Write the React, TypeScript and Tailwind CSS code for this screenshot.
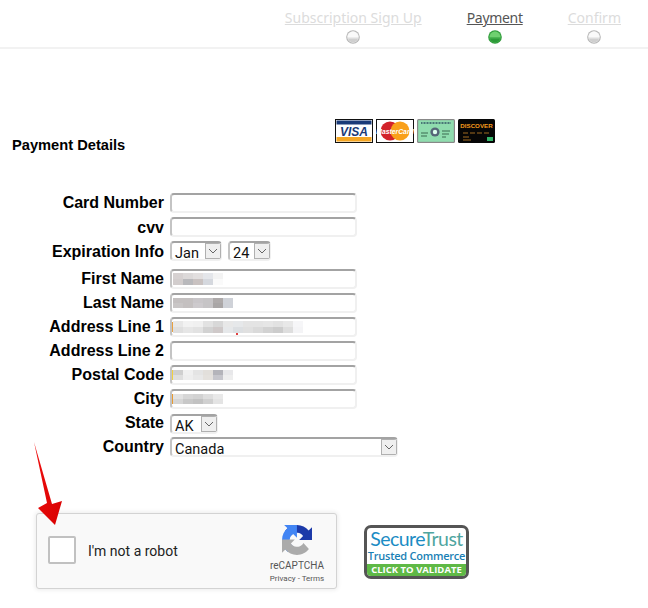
const steps = [
  { name: "Subscription Sign Up", active: false },
  { name: "Payment", active: true },
  { name: "Confirm", active: false },
];

type Cell = string;

const firstName: Cell[][] = [
  ["bg-[#d6d1d1]", "bg-[#dcd9d9]", "bg-[#e2dfdf]", "bg-[#e4e6ea]", "bg-[#f3f3f3]"],
  ["bg-[#d2cdcd]", "bg-[#b9b9bc]", "bg-[#c9c2c1]", "bg-[#d5d8de]", "bg-[#fafafa]"],
];
const lastName: Cell[][] = [
  ["bg-[#c4c0c0]", "bg-[#c4c0c0]", "bg-[#c9c6c9]", "bg-[#c6c4c6]", "bg-[#aeaaaa]", "bg-[#cfd2d8]"],
  ["bg-[#c9c6c6]", "bg-[#c4c0c0]", "bg-[#cdcacd]", "bg-[#c6c4c6]", "bg-[#a9a6a6]", "bg-[#cfd2d8]"],
];
const address: Cell[][] = [
  ["bg-[#e8e8e8]", "bg-[#f2f2f2]", "bg-[#f0f0f0]", "bg-[#e2e2e2]", "bg-[#d8d8d8]", "bg-[#e8e8e8]", "bg-[#e6e8ea]", "bg-[#e4e4e4]", "bg-[#e4e4e4]", "bg-[#e6e6e6]", "bg-[#e2e2e2]", "bg-[#e8e8e8]", "bg-[#f6f6f8]"],
  ["bg-[#dfdfdf]", "bg-[#e6e6e6]", "bg-[#e2e2e2]", "bg-[#d2d2d2]", "bg-[#cfc9c9]", "bg-[#e6e8ea]", "bg-[#dcdfe2]", "bg-[#e0e0e0]", "bg-[#dadada]", "bg-[#d2d2d2]", "bg-[#cccccc]", "bg-[#dedede]", "bg-[#f4f4f6]"],
];
const postal: Cell[][] = [
  ["bg-[#cfcfcf]", "bg-[#f0f0f0]", "bg-[#e4e4e4]", "bg-[#e2dfdb]", "bg-[#b4b4ba]", "bg-[#e8e8ea]"],
  ["bg-[#dedede]", "bg-[#eeeeee]", "bg-[#e8e8e8]", "bg-[#e4e1dd]", "bg-[#c6c6cc]", "bg-[#eeeeee]"],
];
const city: Cell[][] = [
  ["bg-[#e2e2e2]", "bg-[#d6d6d6]", "bg-[#d2d2d2]", "bg-[#dedede]", "bg-[#e9e9e9]"],
  ["bg-[#d6d6d6]", "bg-[#c8c8c8]", "bg-[#c2c2c2]", "bg-[#d0d0d0]", "bg-[#e4e4e4]"],
];

function Dot({ active }: { active: boolean }) {
  return (
    <svg width="14" height="14" viewBox="0 0 14 14">
      <circle cx="7" cy="7" r="6.8" fill={active ? "#2f9a3a" : "#b4b4b4"} />
      <circle cx="7" cy="7" r="5.8" fill={active ? "#4cb653" : "#ececec"} />
      <path d="M1.6 7a5.4 5.4 0 0 1 10.8 0z" fill={active ? "#6fd070" : "#fafafa"} />
      <path d="M2 8.4h10a5.2 5.2 0 0 1-10 0z" fill={active ? "#2c9a38" : "#cfcfcf"} />
    </svg>
  );
}

function Pixels({ rows, edge, rowH = "h-[5px]" }: { rows: Cell[][]; edge?: string; rowH?: string }) {
  return (
    <div className="flex items-center">
      <div className={`h-[10px] w-[1px] ${edge ?? "bg-transparent"}`} />
      <div className="flex flex-col">
        {rows.map((row, i) => (
          <div key={i} className={`flex ${rowH}`}>
            {row.map((c, j) => (
              <div key={j} className={`w-[10px] ${c}`} />
            ))}
          </div>
        ))}
      </div>
    </div>
  );
}

function TextBox({ children }: { children?: React.ReactNode }) {
  return (
    <div className="relative flex h-[20px] w-[187px] items-center overflow-hidden rounded-[4px] border-2 border-t-[#a3a3a3] border-r-[#f0f0f0] border-b-[#f0f0f0] border-l-[#c4c4c4] bg-white">
      {children}
    </div>
  );
}

function SelectBox({ value, width }: { value: string; width: string }) {
  return (
    <div
      className={`flex h-[20px] ${width} overflow-hidden rounded-[4px] border-2 border-r border-t-[#a3a3a3] border-r-[#f0f0f0] border-b-[#f0f0f0] border-l-[#c4c4c4] bg-white`}
    >
      <span className="flex-1 pl-[3px] font-['Roboto',sans-serif] text-[14.5px] leading-[22px] text-[#111]">
        {value}
      </span>
      <span className="flex h-[16px] w-[16px] items-center justify-center border border-[#b0b0b0] bg-[#efefef]">
        <svg width="10" height="6" viewBox="0 0 10 6">
          <path d="M1 1l4 4 4-4" fill="none" stroke="#666" strokeWidth="1" />
        </svg>
      </span>
    </div>
  );
}

function Row({
  label,
  h,
  pt = "pt-[1px]",
  children,
}: {
  label: string;
  h: string;
  pt?: string;
  children: React.ReactNode;
}) {
  return (
    <div className={`flex ${h} items-start gap-[6px]`}>
      <div className={`w-[164px] ${pt} text-right text-[16px] font-bold leading-[18px] text-black`}>{label}</div>
      {children}
    </div>
  );
}

function CardLogos() {
  return (
    <div className="flex gap-[3px]">
      <svg width="38" height="24" viewBox="0 0 38 24">
        <rect width="38" height="24" fill="#111" />
        <rect x="1" y="1" width="36" height="22" fill="#fff" />
        <rect x="1.5" y="1.5" width="35" height="4" fill="#1a3a78" />
        <rect x="1.5" y="18" width="35" height="4.5" fill="#f5a623" />
        <text x="19" y="16.5" textAnchor="middle" fontFamily="Liberation Sans" fontWeight="700" fontStyle="italic" fontSize="12" fill="#1a3a78">
          VISA
        </text>
      </svg>
      <svg width="38" height="24" viewBox="0 0 38 24">
        <rect width="38" height="24" fill="#111" />
        <rect x="1" y="1" width="36" height="22" fill="#fff" />
        <circle cx="14" cy="12" r="9.5" fill="#d2222a" />
        <circle cx="24" cy="12" r="9.5" fill="#f9a01b" />
        <text x="19" y="14.5" textAnchor="middle" fontFamily="Liberation Sans" fontWeight="700" fontStyle="italic" fontSize="6.8" fill="#fff">
          MasterCard
        </text>
      </svg>
      <svg width="38" height="24" viewBox="0 0 38 24">
        <rect width="38" height="24" rx="1.5" fill="#888" />
        <rect x="1.2" y="1.2" width="35.6" height="21.6" fill="#8fdcae" />
        <path d="M4 4h30" stroke="#356" strokeWidth="1.4" strokeDasharray="1 0.5" />
        <circle cx="18" cy="13" r="4.6" fill="#567" />
        <circle cx="18" cy="13" r="2.2" fill="#dfe" />
        <path d="M4 14h7M4 17h6M25 12h8M25 15h7M25 18h4" stroke="#3b6a50" strokeWidth="1" />
      </svg>
      <svg width="37" height="24" viewBox="0 0 37 24">
        <rect width="37" height="24" rx="1.5" fill="#060606" />
        <text x="18.5" y="8.5" textAnchor="middle" fontFamily="Liberation Sans" fontWeight="700" fontSize="6.2" fill="#f59a1d">
          DISCOVER
        </text>
        <path d="M5 14h5M12 14h5M19 14h5M26 14h5M5 18h6M5 21h8" stroke="#a06a20" strokeWidth="1" />
        <rect x="29" y="18" width="6" height="4" fill="#35b56a" />
      </svg>
    </div>
  );
}

function RecaptchaLogo() {
  return (
    <svg width="30" height="30" viewBox="0 0 64 64">
      <path
        d="M64 31.955l-.033-1.37V4.687l-7.16 7.16C50.948 4.674 42.033.093 32.05.093c-10.4 0-19.622 4.96-25.458 12.64l11.736 11.86a15.55 15.55 0 0 1 4.754-5.334c2.05-1.6 4.952-2.906 8.968-2.906.485 0 .86.057 1.135.163 4.976.393 9.288 3.14 11.828 7.124l-8.307 8.307c10.522-.04 22.4-.066 27.295.005"
        fill="#1c3aa9"
      />
      <path
        d="M31.862 0l-1.37.033H4.594l7.16 7.16C4.674 13.05.093 21.966.093 31.95c0 10.4 4.96 19.622 12.64 25.458l11.86-11.736a15.55 15.55 0 0 1-5.334-4.754c-1.6-2.05-2.906-4.952-2.906-8.968 0-.485.057-.86.163-1.135.393-4.976 3.14-9.288 7.124-11.828l8.307 8.307C31.907 17.772 31.933 5.894 31.862 0z"
        fill="#4285f4"
      />
      <path
        d="M.001 31.955l.033 1.37v25.9l7.16-7.16c5.857 7.173 14.772 11.754 24.755 11.754 10.4 0 19.622-4.96 25.458-12.64L45.67 38.32a15.55 15.55 0 0 1-4.754 5.334c-2.05 1.6-4.952 2.906-8.968 2.906-.485 0-.86-.057-1.135-.163-4.976-.393-9.288-3.14-11.828-7.124l8.307-8.307c-10.522.04-22.4.066-27.295-.005"
        fill="#ababab"
      />
    </svg>
  );
}

function SecureTrustBadge() {
  return (
    <div className="ml-[27px] mt-[12px] flex h-[54px] w-[105px] flex-col overflow-hidden rounded-[7px] border-[3px] border-[#555] bg-white">
      <div className="mt-[1px] text-center font-['Lato',sans-serif] text-[19.5px] leading-[20px] tracking-[-0.55px] text-[#1b8cc4]">
        Secure<span className="text-[#4fa5a0]">Trust</span>
      </div>
      <div className="whitespace-nowrap text-center font-['Open_Sans',sans-serif] text-[11px] font-semibold leading-[13px] tracking-[-0.25px] text-[#1a7fb5]">
        Trusted Commerce
      </div>
      <div className="mt-auto flex h-[12px] items-center justify-center bg-[#5fb946] font-['Open_Sans',sans-serif] text-[9.5px] font-bold leading-none text-white">
        CLICK TO VALIDATE
      </div>
    </div>
  );
}

export default function App() {
  return (
    <div className="relative h-[608px] w-[648px] overflow-hidden bg-white font-['Liberation_Sans',Arial,sans-serif]">
      <header className="flex h-[49px] justify-end gap-[45px] border-b-2 border-[#f2f2f2] pr-[27px] pt-[8px]">
        {steps.map((s) => (
          <div key={s.name} className="flex flex-col items-center">
            <a
              className={`font-['Noto_Sans',sans-serif] text-[14px] leading-[20px] underline ${
                s.active ? "tracking-[-0.3px] text-[#555]" : "text-[#dcdcdc]"
              }`}
            >
              {s.name}
            </a>
            <div className="mt-[2px]">
              <Dot active={s.active} />
            </div>
          </div>
        ))}
      </header>

      <section className="flex pl-[12px] pt-[70px]">
        <h2 className="mt-[18px] w-[323px] text-[14.67px] font-bold leading-[16px] text-black">Payment Details</h2>
        <CardLogos />
      </section>

      <form className="mt-[40px] flex flex-col">
        <Row label="Card Number" h="h-[24px]">
          <TextBox />
        </Row>
        <Row label="cvv" h="h-[24px]" pt="pt-[2px]">
          <TextBox />
        </Row>
        <Row label="Expiration Info" h="h-[28px]" pt="pt-[2px]">
          <div className="flex gap-[6px]">
            <SelectBox value="Jan" width="w-[52px]" />
            <SelectBox value="24" width="w-[43px]" />
          </div>
        </Row>
        <Row label="First Name" h="h-[24px]">
          <TextBox>
            <Pixels rows={firstName} rowH="h-[6px]" />
          </TextBox>
        </Row>
        <Row label="Last Name" h="h-[24px]">
          <TextBox>
            <Pixels rows={lastName} />
          </TextBox>
        </Row>
        <Row label="Address Line 1" h="h-[24px]">
          <TextBox>
            <Pixels rows={address} edge="bg-[#e8a040]" rowH="h-[6px]" />
            <span className="absolute bottom-0 left-[64px] h-[2px] w-[2px] bg-[#e04040]" />
          </TextBox>
        </Row>
        <Row label="Address Line 2" h="h-[24px]">
          <TextBox />
        </Row>
        <Row label="Postal Code" h="h-[24px]">
          <TextBox>
            <Pixels rows={postal} edge="bg-[#f0d040]" />
          </TextBox>
        </Row>
        <Row label="City" h="h-[25px]">
          <TextBox>
            <Pixels rows={city} edge="bg-[#e89a30]" />
          </TextBox>
        </Row>
        <Row label="State" h="h-[23px]" pt="pt-0">
          <SelectBox value="AK" width="w-[48px]" />
        </Row>
        <Row label="Country" h="h-[20px]">
          <SelectBox value="Canada" width="w-[228px]" />
        </Row>
      </form>

      <div className="flex pl-[36px] pt-[56px]">
        <div className="flex h-[76px] w-[301px] items-start rounded-[3px] border border-[#d3d3d3] bg-[#f9f9f9] pl-[11px] shadow-[0_0_4px_1px_rgba(0,0,0,0.08)]">
          <div className="mt-[22px] h-[28px] w-[28px] rounded-[2px] border-2 border-[#c1c1c1] bg-white" />
          <span className="ml-[12px] mt-[27px] flex-1 font-['Roboto',sans-serif] text-[14px] leading-[20px] text-[#222]">
            I'm not a robot
          </span>
          <div className="flex w-[70px] flex-col items-center pr-[8px] pt-[11px] font-['Roboto',sans-serif] text-[#555]">
            <RecaptchaLogo />
            <span className="mt-[4px] text-[10px] leading-[14px]">reCAPTCHA</span>
            <span className="text-[8px] leading-[11px]">Privacy - Terms</span>
          </div>
        </div>
        <SecureTrustBadge />
      </div>

      {/* red pointer annotation over the captcha box */}
      <svg className="absolute left-[30px] top-[438px]" width="40" height="92" viewBox="0 0 40 92">
        <defs>
          <linearGradient id="arrowRed" x1="0" y1="0" x2="1" y2="1">
            <stop offset="0" stopColor="#f01010" />
            <stop offset="1" stopColor="#d80000" />
          </linearGradient>
        </defs>
        <polygon points="4,4 22,66 32,63 25,87 8,70 17,65" fill="url(#arrowRed)" />
      </svg>
    </div>
  );
}
